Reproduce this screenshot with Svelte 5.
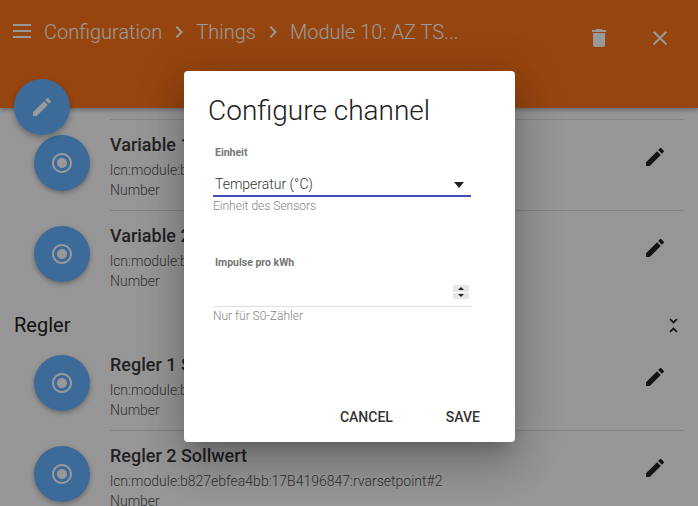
<script>
	const editPath = 'M3 17.25V21h3.75L17.81 9.94l-3.75-3.75L3 17.25zM20.71 7.04c.39-.39.39-1.02 0-1.41l-2.34-2.34c-.39-.39-1.02-.39-1.41 0l-1.83 1.83 3.75 3.75 1.83-1.83z'
	const radioPath = 'M12 7c-2.76 0-5 2.24-5 5s2.24 5 5 5 5-2.24 5-5-2.24-5-5-5zm0-5C6.48 2 2 6.48 2 12s4.48 10 10 10 10-4.48 10-10S17.52 2 12 2zm0 18c-4.42 0-8-3.58-8-8s3.58-8 8-8 8 3.58 8 8-3.58 8-8 8z'
	const chevronPath = 'M8.59 16.59L13.17 12 8.59 7.41 10 6l6 6-6 6z'

	const groups = [
		{
			name: null,
			channels: [
				{ label: 'Variable 1', uid: 'lcn:module:b827ebfea4bb:17B4196847:variable#1' },
				{ label: 'Variable 2', uid: 'lcn:module:b827ebfea4bb:17B4196847:variable#2' },
			],
		},
		{
			name: 'Regler',
			channels: [
				{ label: 'Regler 1 Sollwert', uid: 'lcn:module:b827ebfea4bb:17B4196847:rvarsetpoint#1' },
				{ label: 'Regler 2 Sollwert', uid: 'lcn:module:b827ebfea4bb:17B4196847:rvarsetpoint#2' },
			],
		},
	]
</script>

<div class="page">
	<header class="navbar">
		<svg class="icon menu" viewBox="0 0 24 24"><path d="M3 5h18v2H3zM3 11h18v2H3zM3 17h18v2H3z" /></svg>
		<nav class="crumbs">
			<span>Configuration</span>
			<svg class="icon" viewBox="0 0 24 24"><path d={chevronPath} /></svg>
			<span>Things</span>
			<svg class="icon" viewBox="0 0 24 24"><path d={chevronPath} /></svg>
			<span>Module 10: AZ TS...</span>
		</nav>
		<div class="actions">
			<svg class="icon" viewBox="0 0 24 24"><path d="M6 19c0 1.1.9 2 2 2h8c1.1 0 2-.9 2-2V7H6v12zM19 4h-3.5l-1-1h-5l-1 1H5v2h14V4z" /></svg>
			<svg class="icon" viewBox="0 0 24 24"><path d="M19 6.41L17.59 5 12 10.59 6.41 5 5 6.41 10.59 12 5 17.59 6.41 19 12 13.41 17.59 19 19 17.59 13.41 12z" /></svg>
		</div>
	</header>

	<main class="list">
		{#each groups as group}
			{#if group.name}
				<div class="group-head">
					<h2>{group.name}</h2>
					<svg class="unfold" viewBox="0 0 24 24"><path d="M7.41 18.59L8.83 20 12 16.83 15.17 20l1.41-1.41L12 14l-4.59 4.59zm9.18-13.18L15.17 4 12 7.17 8.83 4 7.41 5.41 12 10l4.59-4.59z" /></svg>
				</div>
			{/if}
			{#each group.channels as channel, i}
				<div class="row" class:plain={group.name && i === 0}>
					<div class="avatar">
						<svg class="icon" viewBox="0 0 24 24"><path d={radioPath} /></svg>
					</div>
					<div class="text">
						<div class="title">{channel.label}</div>
						<div class="sub">{channel.uid}</div>
						<div class="sub">Number</div>
					</div>
					<svg class="icon edit" viewBox="0 0 24 24"><path d={editPath} /></svg>
				</div>
			{/each}
		{/each}
	</main>

	<button class="fab" aria-label="Edit">
		<svg class="icon" viewBox="0 0 24 24"><path d={editPath} /></svg>
	</button>

	<div class="backdrop">
		<div class="dialog" role="dialog">
			<h1>Configure channel</h1>
			<div class="field">
				<label for="unit">Einheit</label>
				<div class="control">
					<select id="unit">
						<option>Temperatur (°C)</option>
					</select>
					<span class="arrow"></span>
				</div>
				<small>Einheit des Sensors</small>
			</div>
			<div class="field second">
				<label for="pulses">Impulse pro kWh</label>
				<div class="control">
					<input id="pulses" type="number" />
					<span class="spinner">
						<span class="up"></span>
						<span class="down"></span>
					</span>
				</div>
				<small>Nur für S0-Zähler</small>
			</div>
			<div class="buttons">
				<button>CANCEL</button>
				<button>SAVE</button>
			</div>
		</div>
	</div>
</div>

<style>
	:global(body) {
		margin: 0;
		overflow: hidden;
	}

	.page {
		position: relative;
		width: 698px;
		height: 506px;
		overflow: hidden;
		background: #fafafa;
		font-family: Roboto, sans-serif;
		color: #212121;
	}

	.icon {
		width: 24px;
		height: 24px;
		fill: currentColor;
		flex: none;
	}

	.navbar {
		display: flex;
		height: 108px;
		box-sizing: border-box;
		padding: 20px 26px 0 10px;
		background: #fb7419;
		color: #fff;
		box-shadow: 0 2px 4px rgba(0, 0, 0, 0.3);
	}

	.menu {
		margin-top: -1px;
	}

	.crumbs {
		display: flex;
		align-items: center;
		align-self: flex-start;
		height: 24px;
		margin-left: 10px;
		gap: 5px;
		font-size: 20px;
		font-weight: 300;
	}

	.actions {
		display: flex;
		gap: 37px;
		margin: 6px 0 0 auto;
	}

	.list {
		padding-top: 11px;
	}

	.group-head {
		display: flex;
		align-items: center;
		justify-content: space-between;
		height: 38px;
		box-sizing: border-box;
		padding: 10px 14px 0;
	}

	h2 {
		margin: 0;
		font-size: 20px;
		font-weight: 400;
		line-height: 28px;
	}

	.unfold {
		width: 21px;
		height: 21px;
		fill: currentColor;
	}

	.row {
		display: flex;
		position: relative;
		height: 91px;
		box-sizing: border-box;
		padding: 0 14px 0 34px;
	}

	.row::before {
		content: '';
		position: absolute;
		top: 0;
		left: 110px;
		right: 14px;
		height: 1px;
		background: rgba(0, 0, 0, 0.12);
	}

	.row.plain::before {
		display: none;
	}

	.avatar {
		display: flex;
		align-items: center;
		justify-content: center;
		width: 56px;
		height: 56px;
		margin-top: 16px;
		border-radius: 50%;
		background: #66b2ff;
		color: #fff;
		box-shadow: 0 2px 5px rgba(0, 0, 0, 0.3);
		flex: none;
	}

	.text {
		flex: 1;
		margin-left: 20px;
		padding-top: 15px;
		min-width: 0;
	}

	.title {
		font-size: 18px;
		font-weight: 500;
		line-height: 22px;
		color: #3a3a3a;
	}

	.sub {
		font-size: 14px;
		font-weight: 300;
		line-height: 20px;
		color: #555;
	}

	.title + .sub {
		margin-top: 4px;
	}

	.edit {
		margin: 26px 17px 0 0;
	}

	.fab {
		display: flex;
		align-items: center;
		justify-content: center;
		position: absolute;
		left: 14px;
		top: 79px;
		width: 56px;
		height: 56px;
		padding: 0;
		border: 0;
		border-radius: 50%;
		background: #66b2ff;
		color: #fff;
		box-shadow: 0 3px 6px rgba(0, 0, 0, 0.3);
	}

	.backdrop {
		display: flex;
		justify-content: center;
		align-items: flex-start;
		position: absolute;
		inset: 0;
		padding-top: 71px;
		box-sizing: border-box;
		background: rgba(0, 0, 0, 0.4);
	}

	.dialog {
		display: flex;
		flex-direction: column;
		width: 331px;
		height: 371px;
		box-sizing: border-box;
		margin-left: 1px;
		padding: 24px 24px 8px;
		border-radius: 4px;
		background: #fff;
		box-shadow: 0 11px 15px -7px rgba(0, 0, 0, 0.2), 0 24px 38px 3px rgba(0, 0, 0, 0.14), 0 9px 46px 8px rgba(0, 0, 0, 0.12);
	}

	h1 {
		margin: 0;
		font-size: 28px;
		font-weight: 300;
		line-height: 32px;
		color: #212121;
	}

	.field {
		display: flex;
		flex-direction: column;
		margin: 19px 20px 0 5px;
	}

	.field.second {
		margin-top: 43px;
	}

	label {
		margin-left: 2px;
		font-size: 10.5px;
		font-weight: 700;
		line-height: 14px;
		color: #757575;
	}

	.control {
		position: relative;
		display: flex;
		margin-top: 8px;
	}

	select,
	input {
		width: 100%;
		box-sizing: border-box;
		margin: 0;
		border: 0;
		border-radius: 0;
		outline: 0;
		background: transparent;
		font-family: Roboto, sans-serif;
		font-size: 14px;
		font-weight: 300;
		color: #333;
	}

	select {
		height: 29px;
		padding: 4px 0 0 2px;
		appearance: none;
		border-bottom: 2px solid #3f51b5;
	}

	input {
		height: 29px;
		padding: 0 2px;
		appearance: textfield;
		border-bottom: 1px solid #e0e0e0;
	}

	.arrow {
		position: absolute;
		right: 7px;
		top: 14px;
		border-style: solid;
		border-width: 6px 5.5px 0;
		border-color: #212121 transparent transparent;
	}

	.spinner {
		display: flex;
		flex-direction: column;
		gap: 1px;
		position: absolute;
		right: 2px;
		top: 7px;
		width: 16px;
	}

	.spinner span {
		position: relative;
		height: 6.5px;
		background: #e6e6e6;
	}

	.spinner span::after {
		content: '';
		position: absolute;
		left: 5px;
		top: 1.5px;
		border-style: solid;
		border-color: transparent;
		border-width: 0 3px;
	}

	.spinner .up::after {
		border-bottom: 3.5px solid #212121;
	}

	.spinner .down::after {
		border-top: 3.5px solid #212121;
	}

	small {
		margin-top: 2px;
		font-size: 12px;
		font-weight: 300;
		line-height: 14px;
		color: #858585;
	}

	.buttons {
		display: flex;
		justify-content: flex-end;
		gap: 37px;
		margin-top: auto;
		padding: 0 3px 1px 0;
	}

	.buttons button {
		padding: 8px;
		border: 0;
		background: none;
		font-family: Roboto, sans-serif;
		font-size: 14px;
		font-weight: 500;
		color: #333;
	}
</style>
